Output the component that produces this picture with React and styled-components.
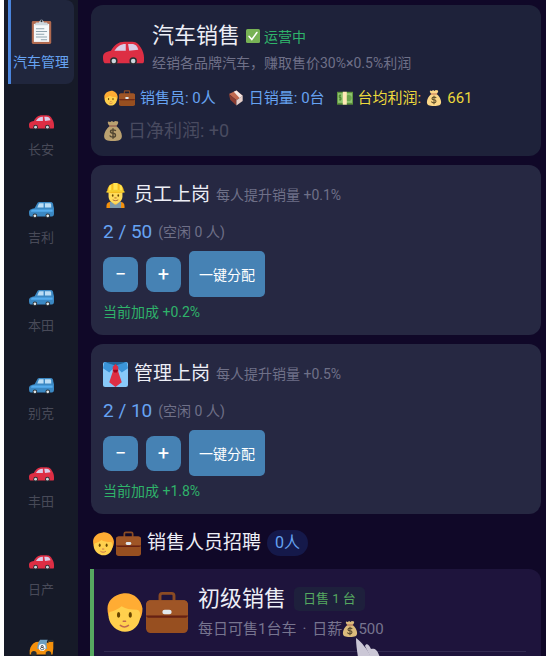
import React from "react";
import styled, { createGlobalStyle } from "styled-components";

const GlobalStyle = createGlobalStyle`
  * {
    box-sizing: border-box;
  }

  body {
    margin: 0;
    background: #fff;
    font-family: Roboto, "Noto Sans CJK SC", sans-serif;
    font-size: 14px;
  }

  h1, h2, p {
    margin: 0;
    font-weight: 400;
  }

  button {
    border: 0;
    font-family: inherit;
    cursor: pointer;
  }
`;

/* ---------- icons ---------- */

const Svg = styled.svg`
  display: block;
  flex: none;
  width: ${props => props.$size}px;
  height: ${props => props.$size}px;
  opacity: ${props => props.$opacity || 1};
`;

const Icon = ({ size = 16, opacity, children }) => (
  <Svg $size={size} $opacity={opacity} viewBox="0 0 36 36" aria-hidden="true">
    {children}
  </Svg>
);

const CarIcon = props => (
  <Icon {...props}>
    <path fill="#dd2e44" d="M0 26c0-4 2-5 7-6 3-5 6-8 12-8h5c5 0 7 1 9 5 2 3 3 6 3 9v3c0 2-1 2-2 2H2c-1 0-2-1-2-5z" />
    <path fill="#d9cbe6" d="M10 20c3-4 5-6 10-6v6zM22 14h3c4 0 5 2 6 5l-8 1z" />
    <circle cx="9.500" cy="29" r="3.300" fill="#292f33" />
    <circle cx="26.500" cy="29" r="3.300" fill="#292f33" />
    <circle cx="9.500" cy="29" r="2" fill="#ccd6dd" />
    <circle cx="26.500" cy="29" r="2" fill="#ccd6dd" />
  </Icon>
);

const SuvIcon = props => (
  <Icon {...props}>
    <path fill="#3b88c3" d="M0 25c0-4 3-5 8-6l4-7c1-2 2-2 4-2h15c3 0 4 2 4 5l1 4v8c0 2-1 4-3 4H3c-2 0-3-1-3-6z" />
    <path fill="#bbddf5" d="M12 18l2-5c1-1 1-1 3-1h4v6zM23 12h7c2 0 2 1 2 6h-9z" />
    <path fill="#55acee" d="M6 21h28v3H3c0-2 1-3 3-3z" />
    <circle cx="8.500" cy="30" r="3.300" fill="#292f33" />
    <circle cx="27" cy="30" r="3.300" fill="#292f33" />
    <circle cx="8.500" cy="30" r="2" fill="#e1e8ed" />
    <circle cx="27" cy="30" r="2" fill="#e1e8ed" />
  </Icon>
);

const RaceCarIcon = props => (
  <Icon {...props}>
    <path fill="#f4900c" d="M1 22c1-6 4-10 9-12l12-1 6 3V9h7v10l-1 9H1z" />
    <path fill="#6d9fc0" d="M12 20c0-6 1-9 4-13h11c-2 3-2 7-1 13z" />
    <path fill="#292f33" d="M28 7h7v3h-7z" />
    <circle cx="19" cy="18" r="5" fill="#fff" />
    <path fill="none" stroke="#31373d" strokeWidth="1.200" d="M19 15a1.500 1.500 0 1 1 0 3 1.500 1.500 0 1 1 0-3zm0 3a1.700 1.700 0 1 1 0 3 1.700 1.700 0 1 1 0-3z" />
    <circle cx="7" cy="27" r="4" fill="#292f33" />
    <circle cx="28" cy="27" r="4" fill="#292f33" />
  </Icon>
);

const ClipboardIcon = props => (
  <Icon {...props}>
    <rect x="4" y="3" width="28" height="33" rx="2" fill="#b06a50" />
    <path fill="#f5f8fa" d="M7 7h22v26H7z" />
    <path fill="#ccd6dd" d="M8 9l2-4h4c1 0 1-4 4-4s3 4 4 4h4l2 4z" />
    <circle cx="18" cy="3" r="1.500" fill="#292f33" />
    <path stroke="#8fa3ae" strokeWidth="1.500" d="M10 14h12M10 18h16M10 22h12M10 26h16M17 30h9" />
  </Icon>
);

const FaceIcon = props => (
  <Icon {...props}>
    <path fill="#ffac33" d="M17 2c8-1 15 5 16 13 0 4-1 8-3 10H6c-2-2-3-6-3-10C3 9 8 3 17 2z" />
    <path fill="#ffd04d" d="M5 18c4-1 8-3 10-5 3 2 8 3 13 3 2 0 4 3 3 7-1 7-6 12-13 12S5 29 4 23c0-2 0-4 1-5z" />
    <ellipse cx="12.500" cy="20.500" rx="1.400" ry="2.500" fill="#664500" />
    <ellipse cx="22.500" cy="20.500" rx="1.400" ry="2.500" fill="#664500" />
    <path fill="none" stroke="#c1694f" strokeWidth="1.300" strokeLinecap="round" d="M16.500 26h2M14 29.500c2 1.500 5 1.500 7 0" />
  </Icon>
);

const BriefcaseIcon = props => (
  <Icon {...props}>
    <path fill="none" stroke="#8a4b24" strokeWidth="2.500" d="M12 9V4c0-2 1-2 2-2h8c1 0 2 0 2 2v5" />
    <rect y="8" width="36" height="28" rx="4" fill="#974f20" />
    <path fill="#9f5526" d="M4 8h28c3 0 4 2 4 4v9H0v-9c0-2 1-4 4-4z" />
    <path fill="#662113" d="M0 21h36c0 1-1 2-3 2H3c-2 0-3-1-3-2z" />
    <rect x="14" y="16" width="8" height="4" rx="2" fill="#e1e8ed" />
  </Icon>
);

const WorkerIcon = props => (
  <Icon {...props}>
    <path fill="#f4900c" d="M5 36v-3c0-4 3-6 7-6h12c4 0 7 2 7 6v3z" />
    <path fill="#7b98ab" d="M10 27h3l5 4 5-4h3v9H10z" />
    <path fill="#ffcc4d" d="M14 24h8v4c-2 4-6 4-8 0z" />
    <path fill="#ffdc5d" d="M8 11h20v8c0 6-4 10-10 10S8 25 8 19z" />
    <path fill="#f5bd1f" d="M6 13C6 5 11 0 18 0s12 5 12 13c0 2-24 2-24 0z" />
    <path fill="#ffe352" d="M15 0h6v11h-6zM9 4l3-2v9H8zM27 4l-3-2v9h4z" />
    <path fill="#f4cf31" d="M5 12c6-3 20-3 26 0v2c-7-2-19-2-26 0z" />
    <ellipse cx="14" cy="18" rx="1.200" ry="1.700" fill="#664500" />
    <ellipse cx="22" cy="18" rx="1.200" ry="1.700" fill="#664500" />
    <path fill="none" stroke="#a85d38" strokeWidth="1.300" strokeLinecap="round" d="M17 21.500h2M14.500 24.500c2 1.300 5 1.300 7 0" />
  </Icon>
);

const TieIcon = props => (
  <Icon {...props}>
    <rect width="36" height="36" rx="3" fill="#88c9f9" />
    <path fill="#3b94d9" d="M2 0h32l2 9-9 6-9-9-9 9-9-6z" />
    <path fill="#226699" d="M5 0h26v1l-13 4L5 1z" />
    <path fill="#dd2e44" d="M14 7l4-4 4 4v7l5 15-9 7-9-7 5-15z" />
    <path fill="#a0041e" d="M14 11h8l-2 4h-4z" />
  </Icon>
);

const BagIcon = props => (
  <Icon {...props}>
    <path fill="#fdd888" d="M12 9c-3-3-4-6-3-8l4 1 3-2 3 2 3-2 5 1c1 2 0 5-3 8 6 5 10 12 10 18 0 7-5 9-16 9S2 34 2 27C2 21 6 14 12 9z" />
    <path fill="#bf6952" d="M11 8h14v2H11z" />
    <path fill="none" stroke="#67552e" strokeWidth="2.500" d="M23 18c-1-2-3-2-5-2-6 0-6 6 0 6s6 7 0 7c-3 0-5-1-6-3M18 13v19" />
  </Icon>
);

const CheckIcon = props => (
  <Icon {...props}>
    <rect width="36" height="36" rx="4" fill="#77b255" />
    <path fill="none" stroke="#fff" strokeWidth="4" strokeLinecap="round" d="M8 19l7 8L28 9" />
  </Icon>
);

const PackageIcon = props => (
  <Icon {...props}>
    <path fill="#c1694f" d="M2 9L19 1l14 12-14 10z" />
    <path fill="#8a3d32" d="M2 9l17 14v12L5 22z" />
    <path fill="#e6cfc9" d="M19 23l14-10v12L19 35z" />
    <path fill="#f5e8e4" d="M13 4l6-3 14 12-7 5z" />
  </Icon>
);

const CashIcon = props => (
  <Icon {...props}>
    <rect y="4" width="36" height="29" fill="#5c913b" />
    <rect x="2" y="7" width="32" height="22" fill="#8fc46f" />
    <circle cx="26" cy="18" r="7" fill="#6ba34b" />
    <path fill="none" stroke="#4b7d2d" strokeWidth="2" d="M9 12H5v5h4v5H5M7 10v14" />
    <path fill="#ffe8b6" d="M13 4h9v29h-9z" />
  </Icon>
);

const HandIcon = styled.svg`
  position: absolute;
  left: 262px;
  top: 69px;
  width: 26px;
  height: 26px;
`;

/* ---------- layout ---------- */

const Shell = styled.div`
  display: flex;
  height: 100vh;
  border-left: 4px solid #fff;
  background: #100828;
  color: #edeef6;
`;

const Sidebar = styled.nav`
  display: flex;
  flex: none;
  flex-direction: column;
  gap: 4px;
  width: 74px;
  padding: 0 4px;
  background: #161a28;
  overflow-y: auto;
  scrollbar-width: none;
`;

const SideItem = styled.button`
  display: flex;
  flex: none;
  flex-direction: column;
  align-items: center;
  gap: 8px;
  height: 84px;
  padding: 19px 3px 0 0;
  border-left: 3px solid ${props => (props.$active ? "#4a84dc" : "transparent")};
  border-radius: 0 8px 8px 0;
  background: ${props => (props.$active ? "#20263d" : "transparent")};
  color: ${props => (props.$active ? "#66a3f2" : "#484a58")};
  font-size: ${props => (props.$active ? 14 : 13)}px;
  line-height: 20px;
  white-space: nowrap;
`;

const Main = styled.main`
  display: flex;
  flex: 1;
  flex-direction: column;
  gap: 9px;
  min-width: 0;
  padding: 5px 5px 0 12px;
  overflow-y: auto;
  scrollbar-width: none;
`;

const Card = styled.section`
  flex: none;
  margin-left: 1px;
  padding: 16px 12px 13px;
  border-radius: 12px;
  background: ${props => props.$bg || "#262842"};
`;

const Row = styled.div`
  display: flex;
  align-items: center;
  gap: ${props => props.$gap || 8}px;
`;

const IconPair = styled.span`
  display: flex;
  flex: none;
`;

const Title = styled.h1`
  font-size: 22px;
  line-height: 30px;
`;

const SubTitle = styled.h2`
  font-size: 19px;
  line-height: 28px;
`;

const Muted = styled.span`
  color: #6f7088;
  font-size: 14px;
  line-height: 24px;
`;

const Status = styled.span`
  display: flex;
  align-items: center;
  gap: 4px;
  color: #2fb36a;
`;

const Stats = styled.div`
  display: flex;
  flex-wrap: wrap;
  gap: 10px 12px;
  margin-top: 12px;
`;

const Stat = styled.span`
  display: flex;
  align-items: center;
  gap: 5px;
  color: ${props => props.$color || "#66a3f2"};
  font-size: 15px;
  line-height: 22px;
`;

const NetProfit = styled.p`
  display: flex;
  align-items: center;
  gap: 5px;
  margin-top: 10px;
  color: #494b60;
  font-size: 18px;
  line-height: 24px;
`;

const Count = styled.p`
  display: flex;
  align-items: center;
  gap: 6px;
  margin-top: 11px;
  color: #66a3f2;
  font-size: 19px;
  line-height: 24px;
`;

const Controls = styled.div`
  display: flex;
  align-items: center;
  gap: 8px;
  margin-top: 7px;
`;

const StepButton = styled.button`
  display: flex;
  align-items: center;
  justify-content: center;
  width: 35px;
  height: 35px;
  padding: 0;
  border-radius: 8px;
  background: #4682b4;
  color: #fff;
  font-size: 20px;
`;

const AssignButton = styled.button`
  height: 46px;
  padding: 0 10px;
  border-radius: 5px;
  background: #4682b4;
  color: #fff;
  font-size: 14px;
`;

const Bonus = styled.p`
  margin-top: 5px;
  color: #2fb36a;
  line-height: 20px;
`;

const SectionHead = styled.div`
  display: flex;
  align-items: center;
  gap: 6px;
  margin: 6px 0 3px 1px;
`;

const Pill = styled.span`
  padding: 0 8px;
  border-radius: 13px;
  background: #15194a;
  color: #66a3f2;
  font-size: 16px;
  line-height: 26px;
`;

const HireCard = styled.article`
  position: relative;
  flex: none;
  padding: 15px 15px 15px 10px;
  border-left: 4px solid #56a860;
  border-radius: 0 12px 12px 0;
  background: #1e143c;
`;

const HireText = styled.p`
  display: flex;
  align-items: center;
  margin-top: 4px;
  color: #77748f;
  font-size: 15px;
  line-height: 22px;
`;

const Dot = styled.span`
  padding: 0 6px;
`;

const Badge = styled.span`
  padding: 0 9px;
  border-radius: 5px;
  background: #1e203c;
  color: #56a860;
  font-size: 13px;
  line-height: 24px;
`;

const Divider = styled.hr`
  height: 1px;
  margin: 11px 0 15px;
  border: 0;
  background: #322a50;
`;

const brands = [
  { name: "长安", Pic: CarIcon },
  { name: "吉利", Pic: SuvIcon },
  { name: "本田", Pic: SuvIcon },
  { name: "别克", Pic: SuvIcon },
  { name: "丰田", Pic: CarIcon },
  { name: "日产", Pic: CarIcon },
  { name: "", Pic: RaceCarIcon },
];

const StaffCard = ({ icon, title, desc, count, idle, bonus }) => (
  <Card>
    <Row $gap={6}>
      {icon}
      <SubTitle>{title}</SubTitle>
      <Muted>{desc}</Muted>
    </Row>
    <Count>
      {count}
      <Muted>({`空闲 ${idle} 人`})</Muted>
    </Count>
    <Controls>
      <StepButton>−</StepButton>
      <StepButton>+</StepButton>
      <AssignButton>一键分配</AssignButton>
    </Controls>
    <Bonus>当前加成 {bonus}</Bonus>
  </Card>
);

const Salesman = ({ size }) => (
  <IconPair>
    <FaceIcon size={size} />
    <BriefcaseIcon size={size} />
  </IconPair>
);

const App = () => {
  return (
    <Shell>
      <GlobalStyle />
      <Sidebar>
        <SideItem $active>
          <ClipboardIcon size={25} />
          汽车管理
        </SideItem>
        {brands.map(({ name, Pic }, i) => (
          <SideItem key={i}>
            <Pic size={25} />
            {name}
          </SideItem>
        ))}
      </Sidebar>
      <Main>
        <Card $bg="#1e223a">
          <Row>
            <CarIcon size={41} />
            <div>
              <Row $gap={6}>
                <Title>汽车销售</Title>
                <Status>
                  <CheckIcon size={14} />
                  运营中
                </Status>
              </Row>
              <Muted>经销各品牌汽车，赚取售价30%×0.5%利润</Muted>
            </div>
          </Row>
          <Stats>
            <Stat>
              <Salesman size={16} />
              销售员: 0人
            </Stat>
            <Stat>
              <PackageIcon size={16} />
              日销量: 0台
            </Stat>
            <Stat $color="#ecd93c">
              <CashIcon size={16} />
              台均利润:
              <BagIcon size={16} />
              661
            </Stat>
          </Stats>
          <NetProfit>
            <BagIcon size={20} opacity={0.7} />
            日净利润: +0
          </NetProfit>
        </Card>

        <StaffCard
          icon={<WorkerIcon size={25} />}
          title="员工上岗"
          desc="每人提升销量 +0.1%"
          count="2 / 50"
          idle={0}
          bonus="+0.2%"
        />
        <StaffCard
          icon={<TieIcon size={25} />}
          title="管理上岗"
          desc="每人提升销量 +0.5%"
          count="2 / 10"
          idle={0}
          bonus="+1.8%"
        />

        <SectionHead>
          <Salesman size={25} />
          <SubTitle>销售人员招聘</SubTitle>
          <Pill>0人</Pill>
        </SectionHead>

        <HireCard>
          <Row $gap={10}>
            <Salesman size={42} />
            <div>
              <Row>
                <Title>初级销售</Title>
                <Badge>日售 1 台</Badge>
              </Row>
              <HireText>
                每日可售1台车
                <Dot>·</Dot>
                日薪
                <BagIcon size={16} opacity={0.85} />
                500
              </HireText>
            </div>
          </Row>
          <Divider />
          <HandIcon viewBox="0 0 26 26" aria-hidden="true">
            <path fill="#cbc7d6" d="M0 0c3 2 6 5 8 8 3 3 5 7 7 11l5 7H3C2 18 0 9 0 0z" />
            <path fill="#cbc7d6" d="M9 8c1-3 4-2 6 3 3-1 6 0 8 6l3 9h-8z" />
          </HandIcon>
        </HireCard>
      </Main>
    </Shell>
  );
};

export default App;
